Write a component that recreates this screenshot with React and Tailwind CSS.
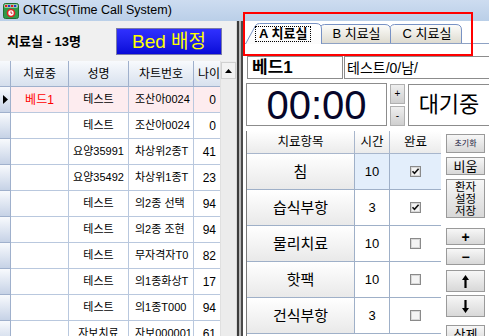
import React from 'react';

const leftRows = [
  ['베드1', '테스트', '조산아0024', '0', true],
  ['', '테스트', '조산아0024', '0'],
  ['', '요양35991', '차상위2종T', '41'],
  ['', '요양35492', '차상위1종T', '23'],
  ['', '테스트', '의2종 선택', '94'],
  ['', '테스트', '의2종 조현', '94'],
  ['', '테스트', '무자격자T0', '82'],
  ['', '테스트', '의1종화상T', '17'],
  ['', '테스트', '의1종T000', '94'],
  ['', '자보치료', '자보000001', '61'],
];

const rightRows = [
  ['침', '10', true, true],
  ['습식부항', '3', true, false],
  ['물리치료', '10', false, false],
  ['핫팩', '10', false, false],
  ['건식부항', '3', false, false],
];

function AppIcon() {
  return (
    <svg width="16" height="16" viewBox="0 0 16 16">
      <rect x="0.5" y="0.5" width="15" height="15" rx="2" fill="#2f9a48" stroke="#1f6f30" />
      <rect x="1.5" y="1.5" width="13" height="3" fill="#ffffff" />
      <rect x="2" y="2" width="2.5" height="2" fill="#d42020" />
      <rect x="5" y="2" width="2.5" height="2" fill="#2040c0" />
      <rect x="8" y="2" width="2.5" height="2" fill="#d42020" />
      <rect x="11" y="2" width="2.5" height="2" fill="#2040c0" />
      <circle cx="8" cy="10" r="4.3" fill="#e02424" />
      <circle cx="8" cy="10" r="2.7" fill="#ffffff" />
      <path d="M8 8.4 V10.2 H9.4" stroke="#c01010" strokeWidth="0.9" fill="none" />
    </svg>
  );
}

function TabShape({ w, h, selected }) {
  const d = `M0.5 ${h} L10.5 2.6 Q11.8 0.5 14.5 0.5 L${w - 6} 0.5 Q${w - 0.5} 0.5 ${w - 0.5} 6 L${w - 0.5} ${h}`;
  const gid = selected ? 'tabsel' : 'tabun';
  return (
    <svg className="absolute inset-0" width={w} height={h} viewBox={`0 0 ${w} ${h}`}>
      <defs>
        <linearGradient id="tabun" x1="0" y1="0" x2="0" y2="1">
          <stop offset="0" stopColor="#fdfdfb" />
          <stop offset="1" stopColor="#dedbd0" />
        </linearGradient>
        <linearGradient id="tabsel" x1="0" y1="0" x2="0" y2="1">
          <stop offset="0" stopColor="#ffffff" />
          <stop offset="1" stopColor="#fbfbfb" />
        </linearGradient>
      </defs>
      <path d={d + ' Z'} fill={`url(#${gid})`} stroke="none" />
      <path d={d} fill="none" stroke="#7892c4" strokeWidth="1" />
    </svg>
  );
}

function CheckBox({ checked }) {
  return (
    <svg width="11" height="11" viewBox="0 0 11 11">
      <rect x="0.5" y="0.5" width="10" height="10" fill="#f4f4f4" stroke="#8a8a8a" />
      <rect x="1.5" y="1.5" width="8" height="8" fill="none" stroke="#d8d8d8" />
      {checked && <path d="M2.5 5.2 L4.5 7.4 L8.6 2.8" stroke="#111" strokeWidth="1.6" fill="none" />}
    </svg>
  );
}

export default function App() {
  return (
    <div className="relative w-[489px] h-[336px] overflow-hidden bg-[#f0f0f0] font-['Liberation_Sans','Noto_Sans_CJK_KR',sans-serif] text-black">
      {/* Title bar */}
      <div className="h-[21px] flex items-center bg-gradient-to-b from-[#cddcf0] to-[#bacfe8]">
        <div className="ml-[3px] mt-[1px]">
          <AppIcon />
        </div>
        <span className="ml-[4px] text-[12.5px] text-black leading-none">OKTCS(Time Call System)</span>
      </div>

      <div className="flex h-[315px]">
        {/* Left panel */}
        <div className="w-[236px] flex flex-col">
          <div className="h-[40px] flex items-center">
            <div className="w-[116px] pl-[7px] text-[13px] font-bold leading-none">치료실 - 13명</div>
            <div className="w-[106px] h-[27px] flex items-center justify-center bg-gradient-to-b from-[#3030ff] to-[#0808d8] border border-[#7a7aa8] text-[#ffff00] text-[19px] leading-none">
              Bed 배정
            </div>
          </div>
          <div className="flex flex-1 overflow-hidden">
            <div className="w-[220px] bg-white flex flex-col">
              {/* header */}
              <div className="flex h-[26px] shrink-0 text-[12px]">
                <div className="w-[11px] border-r border-b border-[#9fb0cc] bg-gradient-to-b from-[#f8fafd] to-[#d4deec]" />
                <div className="w-[58px] flex items-center justify-center border-r border-b border-[#9fb0cc] bg-gradient-to-b from-[#f8fafd] to-[#d8e1ee]">치료중</div>
                <div className="w-[60px] flex items-center justify-center border-r border-b border-[#9fb0cc] bg-gradient-to-b from-[#f8fafd] to-[#d8e1ee]">성명</div>
                <div className="w-[65px] flex items-center justify-center border-r border-b border-[#9fb0cc] bg-gradient-to-b from-[#f8fafd] to-[#d8e1ee]">차트번호</div>
                <div className="w-[26px] flex items-center pl-[4px] overflow-hidden whitespace-nowrap border-b border-[#9fb0cc] bg-gradient-to-b from-[#f8fafd] to-[#d8e1ee]">나이</div>
              </div>
              {leftRows.map((r, i) => (
                <div key={i} className={`flex h-[26px] shrink-0 text-[11px] ${r[4] ? 'bg-[#fdecef]' : 'bg-white'}`}>
                  <div className="w-[11px] flex items-center justify-center border-r border-b border-[#9fb0cc] bg-gradient-to-b from-[#f8fafd] to-[#c6d2e6]">
                    {r[4] && (
                      <svg width="5" height="9" viewBox="0 0 5 9"><path d="M0 0 L5 4.5 L0 9 Z" fill="#000" /></svg>
                    )}
                  </div>
                  <div className="w-[58px] flex items-center justify-center border-r border-b border-[#b9c8de] text-[#ff0000] text-[12px]">{r[0]}</div>
                  <div className="w-[60px] flex items-center justify-center border-r border-b border-[#b9c8de] whitespace-nowrap overflow-hidden">{r[1]}</div>
                  <div className="w-[65px] flex items-center pl-[6px] border-r border-b border-[#b9c8de] whitespace-nowrap overflow-hidden">{r[2]}</div>
                  <div className="w-[26px] flex items-center justify-end pr-[4px] border-b border-[#b9c8de] text-[12px]">{r[3]}</div>
                </div>
              ))}
            </div>
            {/* scrollbar */}
            <div className="w-[16px] bg-[#ececec] flex flex-col border-l border-[#e0e0e0]">
              <div className="h-[17px] mt-[1px] flex items-center justify-center bg-[#f2f2f2] border border-[#d0d0d0]">
                <svg width="7" height="4" viewBox="0 0 7 4"><path d="M0 4 L3.5 0 L7 4 Z" fill="#000" /></svg>
              </div>
            </div>
          </div>
        </div>

        {/* Splitter */}
        <div className="w-[7px] flex">
          <div className="w-[1px] bg-[#d8d8d8]" />
          <div className="w-[2px] bg-[#3c3c3c]" />
          <div className="w-[2px] bg-[#b8b8b8]" />
          <div className="w-[2px] bg-[#4a4a4a]" />
        </div>

        {/* Right panel */}
        <div className="flex-1 bg-white flex flex-col overflow-hidden">
          {/* Tabs */}
          <div className="h-[23px] shrink-0 flex items-end pl-[2px] border-b border-[#8ea2c4]">
            <div className="relative z-30 w-[77px] h-[21px] -mb-px shrink-0">
              <TabShape w={77} h={21} selected />
              <div className="relative h-full flex items-center pl-[10px]">
                <span className="border border-dotted border-black px-[3px] h-[16px] flex items-center text-[13px] font-bold leading-none">A 치료실</span>
              </div>
            </div>
            <div className="relative z-20 w-[81px] h-[19px] -ml-[12px] shrink-0">
              <TabShape w={81} h={19} />
              <div className="relative h-full flex items-center justify-center pl-[12px] text-[13px] leading-none">B 치료실</div>
            </div>
            <div className="relative z-10 w-[82px] h-[19px] -ml-[11px] shrink-0">
              <TabShape w={82} h={19} />
              <div className="relative h-full flex items-center justify-center pl-[12px] text-[13px] leading-none">C 치료실</div>
            </div>
          </div>

          {/* Row 1 */}
          <div className="mt-[12px] flex h-[23px] pl-[4px] shrink-0">
            <div className="w-[96px] shrink-0 border border-[#8c8c8c] flex items-center pl-[4px] text-[17px] font-bold leading-none">베드1</div>
            <div className="w-[150px] ml-[1px] shrink-0 border border-[#8c8c8c] flex items-center pl-[2px] text-[14px] leading-none">테스트/0/남/</div>
          </div>

          {/* Row 2 */}
          <div className="mt-[4px] flex h-[43px] pl-[3px] shrink-0">
            <div className="w-[141px] shrink-0 border border-[#8c8c8c] flex items-center justify-center text-[40px] leading-none text-[#06062a]">00:00</div>
            <div className="ml-[3px] w-[15px] mt-[1px] flex flex-col gap-[2px] shrink-0">
              <div className="h-[20px] flex items-center justify-center bg-gradient-to-b from-[#efefef] to-[#cfcfcf] border border-[#b0b0b0] text-[10px] leading-none">+</div>
              <div className="h-[20px] flex items-center justify-center bg-gradient-to-b from-[#efefef] to-[#cfcfcf] border border-[#b0b0b0] text-[10px] leading-none">-</div>
            </div>
            <div className="ml-[3px] mt-[1px] w-[82px] h-[42px] shrink-0 border border-[#8c8c8c] flex items-center justify-center text-[22px] leading-none">대기중</div>
          </div>

          {/* Grid + buttons */}
          <div className="mt-[5px] flex pl-[3px] flex-1">
            <div className="w-[195px] shrink-0 flex flex-col border-l border-[#7a7a7a]">
              <div className="flex h-[23px] shrink-0 text-[12.5px]">
                <div className="w-[108px] flex items-center justify-center border-r border-b border-[#a8b6cc] bg-gradient-to-b from-white to-[#ebebeb]">치료항목</div>
                <div className="w-[35px] flex items-center justify-center border-r border-b border-[#a8b6cc] bg-gradient-to-b from-white to-[#ebebeb]">시간</div>
                <div className="w-[51px] flex items-center justify-center border-b border-[#a8b6cc] bg-gradient-to-b from-white to-[#ebebeb]">완료</div>
              </div>
              {rightRows.map((r, i) => (
                <div key={i} className="flex h-[36px] shrink-0">
                  <div className="w-[108px] flex items-center justify-center border-r border-b border-[#9fb0c8] bg-gradient-to-b from-white to-[#e9e9e9] text-[15px] leading-none">{r[0]}</div>
                  <div className={`w-[35px] flex items-center justify-center border-r border-b border-[#9fb0c8] text-[13px] leading-none ${r[3] ? 'bg-[#e3eefb]' : 'bg-white'}`}>{r[1]}</div>
                  <div className={`w-[51px] flex items-center justify-center border-b border-[#9fb0c8] ${r[3] ? 'bg-[#e3eefb]' : 'bg-white'}`}>
                    <CheckBox checked={r[2]} />
                  </div>
                </div>
              ))}
            </div>
            <div className="ml-[5px] w-[39px] shrink-0 pt-[3px] flex flex-col">
              <div className="h-[19px] flex items-center justify-center bg-gradient-to-b from-[#f7f7f7] to-[#d8d8d8] border border-[#9a9a9a] text-[8px] leading-none text-[#202040]">초기화</div>
              <div className="mt-[4px] h-[18px] flex items-center justify-center bg-gradient-to-b from-[#f7f7f7] to-[#d8d8d8] border border-[#9a9a9a] text-[13px] leading-none">비움</div>
              <div className="mt-[4px] h-[39px] flex flex-col items-center justify-center bg-gradient-to-b from-[#f7f7f7] to-[#d8d8d8] border border-[#9a9a9a] text-[11.5px] leading-[12px]">
                <span>환자</span><span>설정</span><span>저장</span>
              </div>
              <div className="mt-[10px] h-[17px] flex items-center justify-center bg-gradient-to-b from-[#f7f7f7] to-[#d8d8d8] border border-[#9a9a9a] text-[14px] font-bold leading-none">+</div>
              <div className="mt-[3px] h-[17px] flex items-center justify-center bg-gradient-to-b from-[#f7f7f7] to-[#d8d8d8] border border-[#9a9a9a] text-[14px] font-bold leading-none">−</div>
              <div className="mt-[5px] h-[22px] flex items-center justify-center bg-gradient-to-b from-[#f7f7f7] to-[#d8d8d8] border border-[#9a9a9a]">
                <svg width="7" height="13" viewBox="0 0 7 13"><path d="M3.5 0 L7 5 H4.6 V13 H2.4 V5 H0 Z" fill="#000" /></svg>
              </div>
              <div className="mt-[3px] h-[22px] flex items-center justify-center bg-gradient-to-b from-[#f7f7f7] to-[#d8d8d8] border border-[#9a9a9a]">
                <svg width="7" height="13" viewBox="0 0 7 13"><path d="M3.5 13 L7 8 H4.6 V0 H2.4 V8 H0 Z" fill="#000" /></svg>
              </div>
              <div className="mt-[8px] h-[19px] flex items-center justify-center bg-gradient-to-b from-[#f7f7f7] to-[#d8d8d8] border border-[#9a9a9a] text-[13px] leading-none">삭제</div>
            </div>
          </div>
        </div>
      </div>

      {/* Red annotation box */}
      <div className="absolute left-[243px] top-[12px] w-[230px] h-[44px] border-2 border-[#ff0000] pointer-events-none" />
    </div>
  );
}
